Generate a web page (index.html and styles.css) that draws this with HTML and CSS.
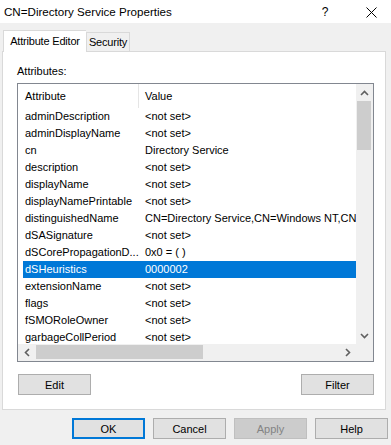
FILE: index.html
```html
<!DOCTYPE html>
<html lang="en">
<head>
  <meta charset="UTF-8">
  <title>CN=Directory Service Properties</title>
  <link rel="stylesheet" href="styles.css">
</head>
<body>

  <div class="dialog">
    <!-- Title bar -->
    <div class="titlebar">
      <span class="title">CN=Directory Service Properties</span>
      <span class="help-btn">?</span>
      <span class="close-btn">
        <svg width="11" height="11" viewBox="0 0 11 11"><path d="M0.5 0.5 L10.5 10.5 M10.5 0.5 L0.5 10.5" stroke="#000" stroke-width="1" fill="none"/></svg>
      </span>
    </div>

    <!-- Tabs -->
    <div class="tabs">
      <div class="tab active">Attribute Editor</div>
      <div class="tab">Security</div>
    </div>

    <div class="panel">
      <div class="label">Attributes:</div>

      <div class="listbox">
        <div class="view">
          <div class="header">
            <div class="head-attr">Attribute</div>
            <div class="head-value">Value</div>
          </div>
          <div class="row"><div class="cell-attr">adminDescription</div><div class="cell-value">&lt;not set&gt;</div></div>
          <div class="row"><div class="cell-attr">adminDisplayName</div><div class="cell-value">&lt;not set&gt;</div></div>
          <div class="row"><div class="cell-attr">cn</div><div class="cell-value">Directory Service</div></div>
          <div class="row"><div class="cell-attr">description</div><div class="cell-value">&lt;not set&gt;</div></div>
          <div class="row"><div class="cell-attr">displayName</div><div class="cell-value">&lt;not set&gt;</div></div>
          <div class="row"><div class="cell-attr">displayNamePrintable</div><div class="cell-value">&lt;not set&gt;</div></div>
          <div class="row"><div class="cell-attr">distinguishedName</div><div class="cell-value">CN=Directory Service,CN=Windows NT,CN=</div></div>
          <div class="row"><div class="cell-attr">dSASignature</div><div class="cell-value">&lt;not set&gt;</div></div>
          <div class="row"><div class="cell-attr">dSCorePropagationD...</div><div class="cell-value">0x0 = ( )</div></div>
          <div class="row selected"><div class="cell-attr">dSHeuristics</div><div class="cell-value">0000002</div></div>
          <div class="row"><div class="cell-attr">extensionName</div><div class="cell-value">&lt;not set&gt;</div></div>
          <div class="row"><div class="cell-attr">flags</div><div class="cell-value">&lt;not set&gt;</div></div>
          <div class="row"><div class="cell-attr">fSMORoleOwner</div><div class="cell-value">&lt;not set&gt;</div></div>
          <div class="row"><div class="cell-attr">garbageCollPeriod</div><div class="cell-value">&lt;not set&gt;</div></div>
        </div>

        <!-- Vertical scrollbar -->
        <div class="vscroll">
          <div class="sb-btn">
            <svg width="9" height="6" viewBox="0 0 9 6"><path d="M1 5 L4.5 1.5 L8 5" stroke="#606060" stroke-width="1.6" fill="none"/></svg>
          </div>
          <div class="vthumb"></div>
          <div class="sb-track"></div>
          <div class="sb-btn">
            <svg width="9" height="6" viewBox="0 0 9 6"><path d="M1 1 L4.5 4.5 L8 1" stroke="#606060" stroke-width="1.6" fill="none"/></svg>
          </div>
        </div>

        <!-- Horizontal scrollbar -->
        <div class="hscroll">
          <div class="sb-btn">
            <svg width="6" height="9" viewBox="0 0 6 9"><path d="M5 1 L1.5 4.5 L5 8" stroke="#606060" stroke-width="1.6" fill="none"/></svg>
          </div>
          <div class="hthumb"></div>
          <div class="sb-track"></div>
          <div class="sb-btn">
            <svg width="6" height="9" viewBox="0 0 6 9"><path d="M1 1 L4.5 4.5 L1 8" stroke="#606060" stroke-width="1.6" fill="none"/></svg>
          </div>
        </div>
        <div class="corner"></div>
      </div>

      <div class="panel-buttons">
        <button class="btn">Edit</button>
        <button class="btn">Filter</button>
      </div>
    </div>

    <div class="dialog-buttons">
      <button class="btn default">OK</button>
      <button class="btn">Cancel</button>
      <button class="btn" disabled>Apply</button>
      <button class="btn">Help</button>
    </div>
  </div>

</body>
</html>
```

FILE: styles.css
```css
body {
  margin: 0;
  font-family: "Liberation Sans", Arial, sans-serif;
  font-size: 11px;
  color: #000;
  background: #f0f0f0;
}
.dialog {
  width: 391px;
  height: 445px;
  background: #f0f0f0;
  overflow: hidden;
}

/* Title bar */
.titlebar {
  display: flex;
  align-items: center;
  height: 23px;
  background: #fff;
  padding-left: 4px;
}
.title {
  flex: 1;
  font-size: 11.6px;
  line-height: 20px;
}
.help-btn {
  width: 52px;
  text-align: center;
  font-size: 12px;
  line-height: 20px;
}
.close-btn {
  width: 40px;
  display: flex;
  justify-content: center;
  padding-top: 1px;
}

/* Tabs */
.tabs {
  display: flex;
  align-items: flex-end;
  height: 21px;
  margin-top: 7px;
  padding-left: 3px;
}
.tab {
  box-sizing: border-box;
  width: 44px;
  height: 19px;
  line-height: 19px;
  text-align: center;
  letter-spacing: -0.2px;
  border: 1px solid #d9d9d9;
  border-bottom: none;
  background: #f0f0f0;
}
.tab.active {
  position: relative;
  z-index: 1;
  width: 83px;
  height: 22px;
  margin-bottom: -1px;
  line-height: 21px;
  background: #fff;
  border-right: none;
}

/* Panel */
.panel {
  box-sizing: border-box;
  width: 384px;
  height: 359px;
  margin-left: 2px;
  padding: 12px 11px 0 14px;
  background: #fff;
  border: 1px solid #d9d9d9;
}
.label {
  line-height: 15px;
  margin-bottom: 4px;
}

/* List view */
.listbox {
  box-sizing: border-box;
  width: 357px;
  height: 279px;
  border: 1px solid #828790;
  display: grid;
  grid-template-columns: 1fr 17px;
  grid-template-rows: 1fr 17px;
}
.view {
  overflow: hidden;
  white-space: nowrap;
}
.header {
  display: flex;
  height: 24px;
  align-items: center;
}
.head-attr {
  box-sizing: border-box;
  width: 121px;
  padding-left: 7px;
  line-height: 24px;
  border-right: 1px solid #e5e5e5;
}
.head-value {
  padding-left: 6px;
}
.row {
  display: flex;
  height: 17px;
  line-height: 17px;
  margin-left: 5px;
}
.cell-attr {
  box-sizing: border-box;
  width: 115px;
  flex-shrink: 0;
  padding-left: 2px;
}
.cell-value {
  padding-left: 7px;
}
.row.selected {
  background: #0078d7;
  color: #fff;
}

/* Scrollbars */
.vscroll {
  display: flex;
  flex-direction: column;
  background: #f0f0f0;
}
.hscroll {
  display: flex;
  background: #f0f0f0;
}
.sb-btn {
  width: 17px;
  height: 17px;
  flex-shrink: 0;
  display: flex;
  align-items: center;
  justify-content: center;
}
.sb-track {
  flex: 1;
}
.vthumb {
  width: 14px;
  height: 49px;
  margin-left: 1px;
  background: #cdcdcd;
}
.hthumb {
  width: 167px;
  height: 14px;
  margin-top: 1px;
  margin-left: 1px;
  background: #cdcdcd;
}
.corner {
  background: #f0f0f0;
}

/* Buttons */
.btn {
  box-sizing: border-box;
  width: 73px;
  height: 21px;
  padding: 0;
  font-family: "Liberation Sans", Arial, sans-serif;
  font-size: 11px;
  color: #000;
  background: #e1e1e1;
  border: 1px solid #adadad;
}
.btn.default {
  border-color: #0078d7;
  box-shadow: inset 0 0 0 1px #0078d7;
}
.btn:disabled {
  background: #cccccc;
  border-color: #bfbfbf;
  color: #838383;
}
.panel-buttons {
  display: flex;
  justify-content: space-between;
  margin-top: 12px;
  padding-left: 1px;
}
.dialog-buttons {
  display: flex;
  justify-content: flex-end;
  gap: 8px;
  margin-top: 8px;
  padding-right: 3px;
}
```
